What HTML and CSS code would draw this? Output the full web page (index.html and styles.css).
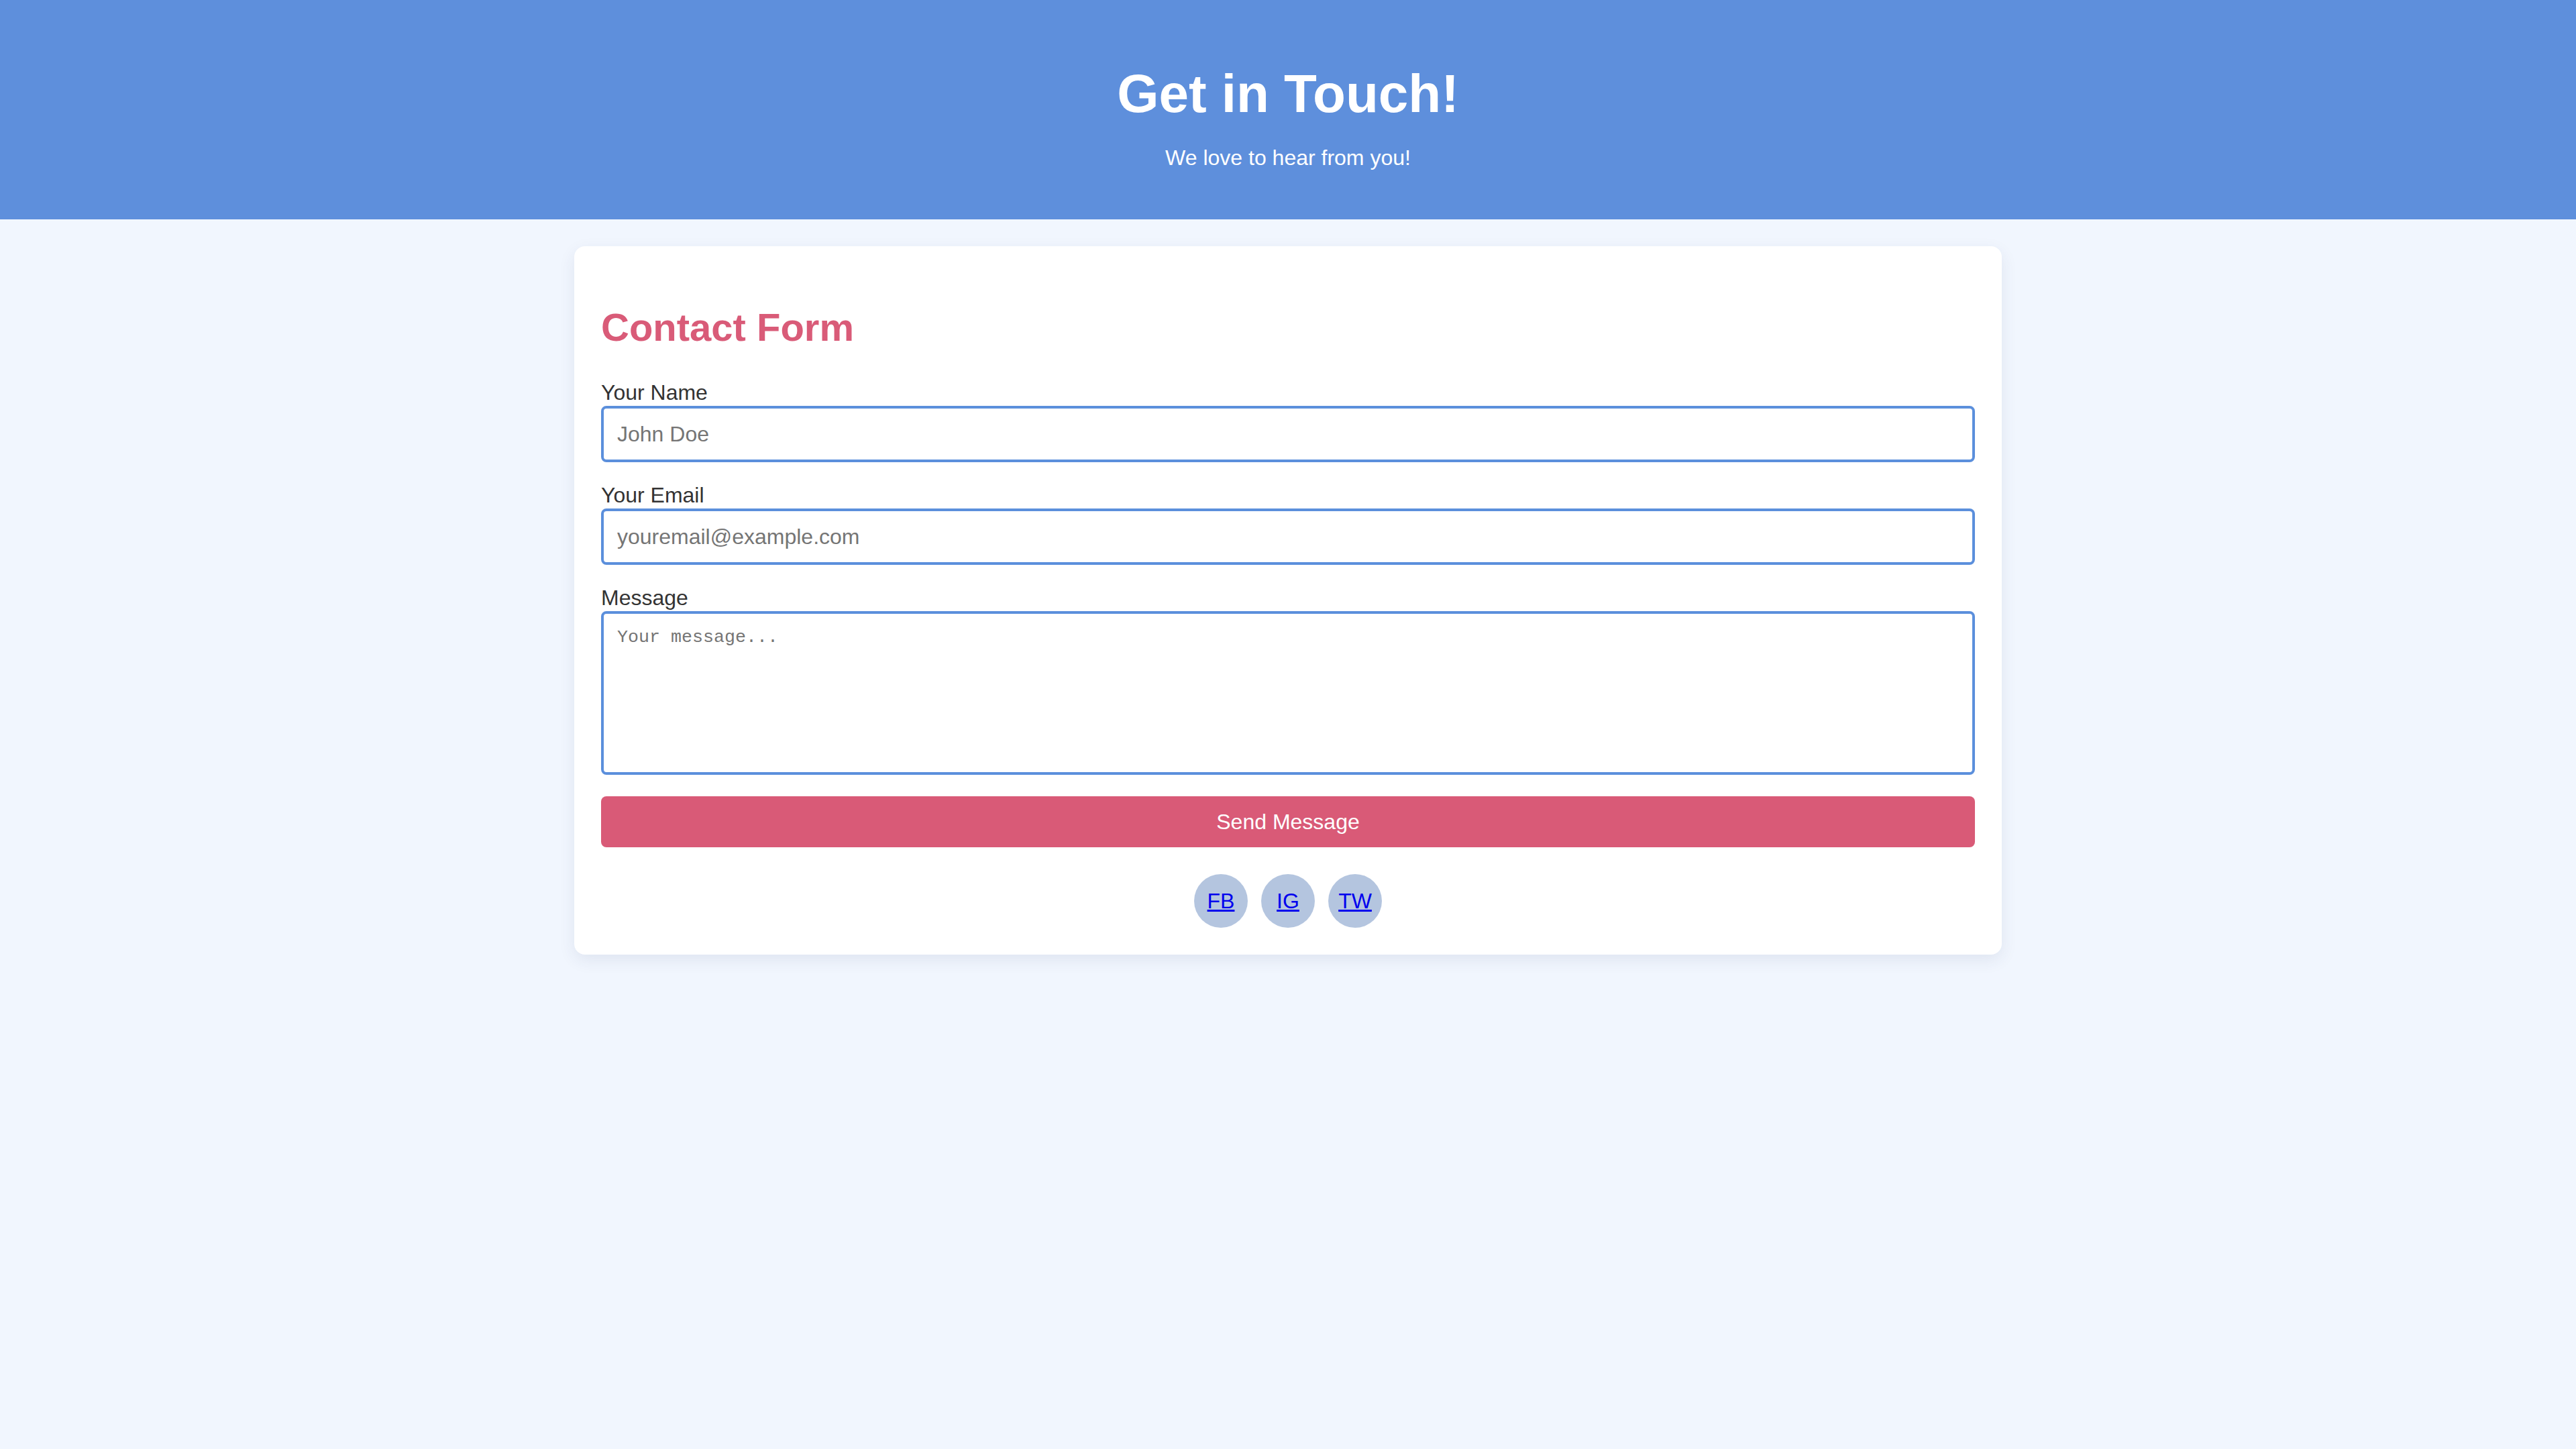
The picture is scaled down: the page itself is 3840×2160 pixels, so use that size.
FILE: index.html
```html
<!DOCTYPE html>
<html lang="en">
<head>
<meta charset="utf-8">
<title>Get in Touch!</title>
<link rel="stylesheet" href="styles.css">
</head>
<body>
<header class="hero">
  <h1 class="hero-title">Get in Touch!</h1>
  <p class="hero-sub">We love to hear from you!</p>
</header>
<main class="card">
  <h2 class="card-title">Contact Form</h2>
  <form class="form">
    <label class="field-label" for="name">Your Name</label>
    <input class="field-input" id="name" type="text" placeholder="John Doe">
    <label class="field-label" for="email">Your Email</label>
    <input class="field-input" id="email" type="email" placeholder="youremail@example.com">
    <label class="field-label" for="msg">Message</label>
    <textarea class="field-area" id="msg" placeholder="Your message..."></textarea>
    <button class="send-btn" type="button">Send Message</button>
  </form>
  <div class="social">
    <a class="social-link" href="#">FB</a>
    <a class="social-link" href="#">IG</a>
    <a class="social-link" href="#">TW</a>
  </div>
</main>
</body>
</html>
```
FILE: styles.css
```css
* {
  box-sizing: border-box;
}

html, body {
  margin: 0;
  padding: 0;
}

body {
  background: #f1f6fe;
  font-family: "Liberation Sans", Arial, sans-serif;
  color: #333333;
  min-height: 2160px;
}

.hero {
  background: #5e8fdc;
  color: #ffffff;
  text-align: center;
  padding: 94px 0 74px;
}

.hero-title {
  margin: 0 0 31px;
  font-size: 80px;
  line-height: 92px;
  font-weight: 700;
}

.hero-sub {
  margin: 0;
  font-size: 32px;
  line-height: 36px;
}

.card {
  width: 2128px;
  margin: 40px auto 0;
  background: #ffffff;
  border-radius: 16px;
  padding: 40px;
  box-shadow: 0 8px 24px rgba(40, 60, 100, 0.09);
}

.card-title {
  margin: 46px 0 45px;
  font-size: 58px;
  line-height: 69px;
  font-weight: 700;
  color: #d95b78;
}

.form {
  display: flex;
  flex-direction: column;
}

.field-label {
  display: block;
  font-size: 32px;
  line-height: 36px;
  margin-bottom: 2px;
  color: #333333;
}

.field-input {
  display: block;
  width: 100%;
  height: 84px;
  padding: 20px;
  border: 4px solid #5b8fdc;
  border-radius: 8px;
  font-family: "Liberation Sans", Arial, sans-serif;
  font-size: 32px;
  line-height: 36px;
  color: #333333;
  background: #ffffff;
  margin: 0 0 31px;
  outline: none;
}

.field-area {
  display: block;
  width: 100%;
  height: 244px;
  padding: 20px;
  border: 4px solid #5b8fdc;
  border-radius: 8px;
  font-family: "Liberation Mono", "DejaVu Sans Mono", monospace;
  font-size: 26.67px;
  color: #333333;
  background: #ffffff;
  margin: 0 0 32px;
  resize: none;
  outline: none;
}

.field-input::placeholder,
.field-area::placeholder {
  color: #757575;
  opacity: 1;
}

.send-btn {
  display: block;
  width: 100%;
  height: 76px;
  border: none;
  border-radius: 8px;
  background: #d95a77;
  color: #ffffff;
  font-family: "Liberation Sans", Arial, sans-serif;
  font-size: 32px;
  line-height: 36px;
  padding: 20px;
  margin: 0;
  cursor: pointer;
}

.social {
  display: flex;
  justify-content: center;
  gap: 20px;
  margin-top: 40px;
}

.social-link {
  display: flex;
  align-items: center;
  justify-content: center;
  width: 80px;
  height: 80px;
  border-radius: 50%;
  background: #b4c5df;
  color: #0000ee;
  text-decoration: underline;
  font-size: 32px;
  line-height: 36px;
}
```
